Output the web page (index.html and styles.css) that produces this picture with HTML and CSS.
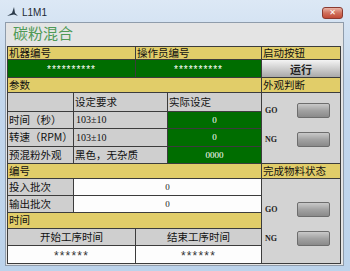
FILE: index.html
```html
<!DOCTYPE html>
<html lang="zh">
<head>
  <meta charset="UTF-8">
  <title>L1M1</title>
  <link rel="stylesheet" href="styles.css">
</head>
<body>
  <div class="window">
    <div class="titlebar">
      <svg class="app-icon" width="13" height="11" viewBox="0 0 13 11">
        <path d="M1 10 L6 7 L8 1 L9 7 L12 10 L8 8.5 Z" fill="#2b3a4a"/>
      </svg>
      <span class="caption">L1M1</span>
      <div class="close">✕</div>
    </div>

    <div class="client">
      <h1 class="heading">碳粉混合</h1>

      <div class="board">
        <!-- 机器 / 操作员 -->
        <div class="cell yellow c2">机器编号</div>
        <div class="cell yellow c2">操作员编号</div>
        <div class="cell yellow">启动按钮</div>

        <div class="cell green center star c2">**********</div>
        <div class="cell green center star c2">**********</div>
        <div class="run-btn">运行</div>

        <!-- 参数 -->
        <div class="cell yellow c4">参数</div>
        <div class="cell yellow">外观判断</div>

        <div class="cell gray"></div>
        <div class="cell gray c2">设定要求</div>
        <div class="cell gray">实际设定</div>
        <div class="panel r4 top1">
          <div class="judge"><span>GO</span><div class="gbtn"></div></div>
          <div class="judge"><span>NG</span><div class="gbtn"></div></div>
        </div>

        <div class="cell gray">时间（秒）</div>
        <div class="cell gray num c2">103±10</div>
        <div class="cell green center val">0</div>

        <div class="cell gray">转速（RPM）</div>
        <div class="cell gray num c2">103±10</div>
        <div class="cell green center val">0</div>

        <div class="cell gray">预混粉外观</div>
        <div class="cell gray c2">黑色，无杂质</div>
        <div class="cell green center val">0000</div>

        <!-- 编号 -->
        <div class="cell yellow c4">编号</div>
        <div class="cell yellow">完成物料状态</div>

        <div class="cell gray">投入批次</div>
        <div class="cell white center val c3">0</div>
        <div class="panel r5 top2">
          <div class="judge"><span>GO</span><div class="gbtn"></div></div>
          <div class="judge"><span>NG</span><div class="gbtn"></div></div>
        </div>

        <div class="cell gray">输出批次</div>
        <div class="cell white center val c3">0</div>

        <!-- 时间 -->
        <div class="cell yellow c4">时间</div>

        <div class="cell gray center c2">开始工序时间</div>
        <div class="cell gray center c2">结束工序时间</div>

        <div class="cell white center star wide c2">******</div>
        <div class="cell white center star wide c2">******</div>
      </div>
    </div>
  </div>
</body>
</html>
```

FILE: styles.css
```css
body {
  margin: 0;
  width: 350px;
  height: 271px;
  overflow: hidden;
  font-family: "Noto Sans CJK SC", "Liberation Sans", sans-serif;
}
.window {
  width: 350px;
  height: 271px;
  background: linear-gradient(#dce8f5, #c3d7ed 30%, #bcd3eb);
  display: flex;
  flex-direction: column;
}
.titlebar {
  height: 22px;
  display: flex;
  align-items: center;
  padding-left: 6px;
}
.app-icon {
  display: block;
}
.caption {
  margin-left: 3px;
  font-family: "Liberation Sans", sans-serif;
  font-size: 10px;
  color: #1e2a36;
  margin-top: 2px;
}
.close {
  margin-left: auto;
  margin-right: 7px;
  align-self: flex-start;
  margin-top: 7px;
  width: 21px;
  height: 12px;
  box-sizing: border-box;
  border: 1px solid #8a3a30;
  border-radius: 3px;
  background: linear-gradient(#eab3a6, #d0705c 50%, #c24a36);
  color: #fff;
  font-family: "DejaVu Sans", sans-serif;
  font-size: 8px;
  font-weight: bold;
  line-height: 10px;
  text-align: center;
}
.client {
  margin: 0 6px 0 5px;
  height: 244px;
  box-sizing: border-box;
  border: 1px solid #8f9cab;
  background: #e4e4e4;
}
.heading {
  margin: 0;
  height: 23px;
  box-sizing: border-box;
  padding: 2px 0 0 7px;
  font-size: 15px;
  line-height: 16px;
  font-weight: normal;
  color: #4f9a57;
}
.board {
  margin-left: 1px;
  width: 334px;
  box-sizing: border-box;
  display: grid;
  grid-template-columns: 65px 61px 31px 93px 78px;
  grid-template-rows: 12px 17px 14px 18px 16px 17px 16px 14px 16px 16px 15px 16px 17px;
  gap: 1px;
  padding: 1px;
  background: #3c3c3c;
}
.cell {
  display: flex;
  align-items: center;
  padding-left: 1px;
  font-size: 10.5px;
  line-height: 1;
  color: #111;
  white-space: nowrap;
}
.c2 { grid-column: span 2; }
.c3 { grid-column: span 3; }
.c4 { grid-column: span 4; }
.r4 { grid-row: span 4; }
.r5 { grid-row: span 5; }
.yellow { background: #e1cd69; }
.gray { background: #cfcfcf; }
.white { background: #fdfdfd; }
.green {
  background: #006d00;
  color: #fff;
}
.center {
  justify-content: center;
  padding-left: 0;
}
.num {
  font-family: "Liberation Serif", serif;
  font-size: 10px;
  padding-left: 2px;
}
.val {
  font-family: "Liberation Serif", serif;
  font-size: 9px;
}
.white.val { color: #222; }
.star {
  font-family: "Liberation Sans", sans-serif;
  font-size: 10px;
  letter-spacing: 1px;
  padding-top: 3px;
}
.star.wide {
  font-size: 12px;
  letter-spacing: 1.2px;
  color: #333;
}
.run-btn {
  background: linear-gradient(#f4f4f4, #d2d2d2 45%, #a9a9a9);
  display: flex;
  align-items: center;
  justify-content: center;
  font-size: 11px;
  font-weight: bold;
  color: #222;
}
.panel {
  background: #d3d3d3;
  display: flex;
  flex-direction: column;
  gap: 14px;
}
.top1 { padding-top: 10px; }
.top2 { padding-top: 23px; }
.judge {
  display: flex;
  align-items: center;
  height: 15px;
  padding-left: 3px;
}
.judge span {
  width: 32px;
  font-family: "Liberation Serif", serif;
  font-size: 8px;
  font-weight: bold;
  color: #222;
}
.gbtn {
  width: 33px;
  height: 15px;
  box-sizing: border-box;
  border: 1px solid #6d6d6d;
  border-radius: 2px;
  background: linear-gradient(#c9c9c9, #a2a2a2 50%, #8a8a8a);
}
```
